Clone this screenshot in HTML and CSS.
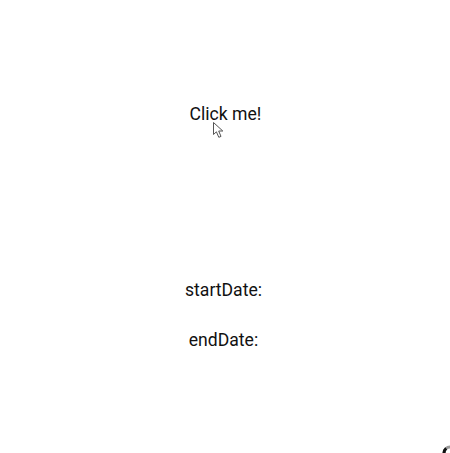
FILE: index.html
```html
<!DOCTYPE html>
<html>
<head>
<meta charset="utf-8">
<link rel="stylesheet" href="styles.css">
</head>
<body>
<div class="app">
  <div class="btn-wrap">
    <span class="btn">Click me!</span>
  </div>
  <div class="dates">
    <div class="date">startDate:</div>
    <div class="date">endDate:</div>
  </div>
</div>
<svg class="cursor" width="12" height="17" viewBox="0 0 12 17"><path d="M0.5 0.5 L0.5 12.5 L3.4 9.8 L5.8 15.3 L8 14.4 L5.7 9 L9.8 9 Z" fill="#fff" stroke="#555" stroke-width="1" stroke-linejoin="miter"/></svg>
<svg class="corner" width="8" height="8" viewBox="0 0 8 8">
  <path d="M2 8 A6 6 0 0 1 8 2" fill="none" stroke="#999" stroke-width="3"/>
  <path d="M2 8 A6 6 0 0 1 4.2 3.4" fill="none" stroke="#111" stroke-width="3"/>
</svg>
</body>
</html>
```
FILE: styles.css
```css
html, body {
  margin: 0;
  padding: 0;
  background: #fff;
}
body {
  font-family: Roboto, "Liberation Sans", sans-serif;
  color: #111;
  width: 450px;
  height: 453px;
  overflow: hidden;
  position: relative;
}
.app {
  display: flex;
  flex-direction: column;
  align-items: center;
  padding-top: 104px;
}
.btn {
  display: block;
  font-size: 17.6px;
  line-height: 21px;
  padding-left: 1px;
}
.cursor {
  position: absolute;
  left: 213px;
  top: 122px;
}
.dates {
  margin-top: 155px;
  display: flex;
  flex-direction: column;
  align-items: center;
  gap: 29px;
}
.date {
  font-size: 17.6px;
  line-height: 21px;
  padding-right: 3px;
}
.corner {
  position: absolute;
  left: 442px;
  top: 445px;
}
```
